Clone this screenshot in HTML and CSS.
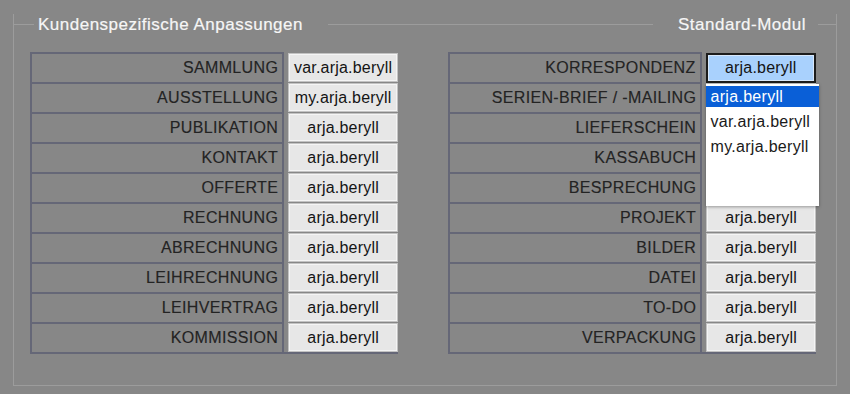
FILE: index.html
```html
<!DOCTYPE html>
<html lang="de">
<head>
    <meta charset="UTF-8">
    <meta name="viewport" content="width=device-width, initial-scale=1.0">
    <title>Module</title>
    <link rel="stylesheet" href="styles.css">
</head>
<body>
    <div class="frame">
        <div class="frame-head">
            <span class="rule rule-start"></span>
            <span class="title title-left">Kundenspezifische Anpassungen</span>
            <span class="rule rule-fill"></span>
            <span class="title title-right">Standard-Modul</span>
            <span class="rule rule-end"></span>
        </div>

        <div class="columns">
            <div class="column">
                <div class="row"><div class="label">SAMMLUNG</div><div class="value">var.arja.beryll</div></div>
                <div class="row"><div class="label">AUSSTELLUNG</div><div class="value">my.arja.beryll</div></div>
                <div class="row"><div class="label">PUBLIKATION</div><div class="value">arja.beryll</div></div>
                <div class="row"><div class="label">KONTAKT</div><div class="value">arja.beryll</div></div>
                <div class="row"><div class="label">OFFERTE</div><div class="value">arja.beryll</div></div>
                <div class="row"><div class="label">RECHNUNG</div><div class="value">arja.beryll</div></div>
                <div class="row"><div class="label">ABRECHNUNG</div><div class="value">arja.beryll</div></div>
                <div class="row"><div class="label">LEIHRECHNUNG</div><div class="value">arja.beryll</div></div>
                <div class="row"><div class="label">LEIHVERTRAG</div><div class="value">arja.beryll</div></div>
                <div class="row"><div class="label">KOMMISSION</div><div class="value">arja.beryll</div></div>
            </div>

            <div class="column">
                <div class="row">
                    <div class="label">KORRESPONDENZ</div>
                    <div class="value value-focus">arja.beryll
                        <div class="dropdown">
                            <div class="option option-selected">arja.beryll</div>
                            <div class="option">var.arja.beryll</div>
                            <div class="option">my.arja.beryll</div>
                        </div>
                    </div>
                </div>
                <!-- values hidden under the open list -->
                <div class="row"><div class="label">SERIEN-BRIEF / -MAILING</div><div class="value"></div></div>
                <div class="row"><div class="label">LIEFERSCHEIN</div><div class="value"></div></div>
                <div class="row"><div class="label">KASSABUCH</div><div class="value"></div></div>
                <div class="row"><div class="label">BESPRECHUNG</div><div class="value"></div></div>
                <div class="row"><div class="label">PROJEKT</div><div class="value">arja.beryll</div></div>
                <div class="row"><div class="label">BILDER</div><div class="value">arja.beryll</div></div>
                <div class="row"><div class="label">DATEI</div><div class="value">arja.beryll</div></div>
                <div class="row"><div class="label">TO-DO</div><div class="value">arja.beryll</div></div>
                <div class="row"><div class="label">VERPACKUNG</div><div class="value">arja.beryll</div></div>
            </div>
        </div>
    </div>
</body>
</html>
```

FILE: styles.css
```css
html, body {
    margin: 0;
    padding: 0;
    background-color: #878787;
}

body {
    font-family: "Liberation Sans", Arial, sans-serif;
    padding-top: 24px;
    height: 370px;
    overflow: hidden;
}

.frame {
    margin: 0 13px;
    border: 1px solid #9c9c9c;
    border-top: none;
    padding: 0 0 31px 16px;
}

.frame-head {
    display: flex;
    align-items: flex-start;
    height: 21px;
    margin: -10px -1px 0 -17px;
}

.rule {
    margin-top: 10px;
    border-top: 1px solid #9c9c9c;
}

.rule-start {
    width: 21px;
}

.rule-fill {
    flex: 1;
}

.rule-end {
    width: 19px;
}

.title {
    color: #f6f6f6;
    font-size: 17px;
    letter-spacing: 0.5px;
    line-height: 21px;
    white-space: nowrap;
    -webkit-text-stroke: 0.2px #f6f6f6;
}

.title-left {
    margin: 0 25px 0 4px;
}

.title-right {
    margin: 0 12px 0 25px;
}

.columns {
    display: flex;
    gap: 50px;
    margin-top: 17px;
}

.column {
    width: 368px;
    border-bottom: 2px solid #656777;
}

.row {
    display: flex;
    gap: 4px;
    height: 30px;
}

.label {
    width: 249px;
    border: 2px solid #656777;
    border-bottom: none;
    color: #232323;
    font-size: 16px;
    letter-spacing: 0.35px;
    line-height: 28px;
    text-align: right;
    padding-right: 4px;
    white-space: nowrap;
    -webkit-text-stroke: 0.15px #232323;
}

.value {
    position: relative;
    width: 109px;
    height: 27px;
    margin-top: 1px;
    border: 1px solid #c2c2c2;
    box-shadow: inset 0 0 0 1px #f4f4f4;
    background-color: #e7e7e7;
    color: #141414;
    font-size: 16px;
    letter-spacing: 0.2px;
    line-height: 27px;
    text-align: center;
    white-space: nowrap;
}

.value-focus {
    width: 108px;
    height: 26px;
    border: 2px solid #1c1c1c;
    box-shadow: inset 0 0 0 1px #d8e8fb;
    background-color: #a9d1fd;
    line-height: 26px;
}

.dropdown {
    position: absolute;
    top: 29px;
    left: -2px;
    width: 113px;
    height: 122px;
    display: flex;
    flex-direction: column;
    gap: 4px;
    padding-top: 2px;
    box-sizing: border-box;
    background-color: #ffffff;
    box-shadow: 0 1px 3px rgba(0, 0, 0, 0.35);
    text-align: left;
    z-index: 2;
}

.option {
    height: 21px;
    line-height: 21px;
    padding-left: 5px;
    color: #1a1a1a;
    font-size: 16px;
    letter-spacing: 0.3px;
}

.option-selected {
    background-color: #0a5fd7;
    color: #ffffff;
}
```
